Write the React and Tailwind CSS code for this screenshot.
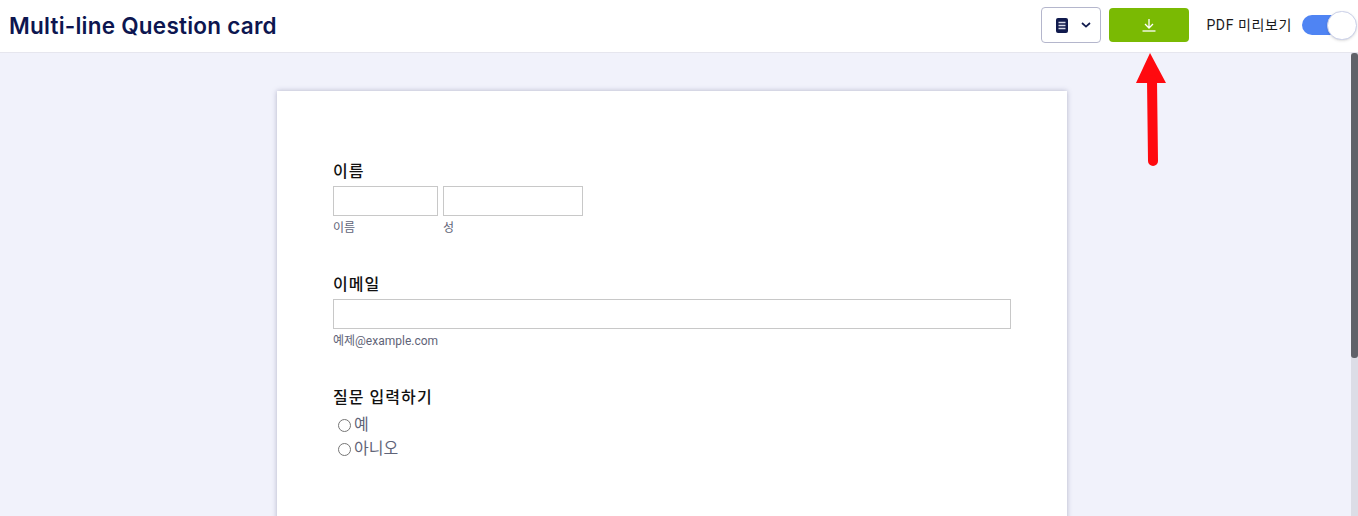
import React from "react";

const cjk = "font-['Roboto','Noto_Sans_CJK_KR',sans-serif]";

function FieldLabel({ children }) {
  return <div className="text-[16px] leading-[20px] font-medium text-[#111] tracking-[1.05px] pt-[1px] -mb-[1px]">{children}</div>;
}

function Hint({ children, className = "" }) {
  return <div className={`text-[12px] leading-[16px] text-[#5f6478] pt-[1px] -mb-[1px] ${className}`}>{children}</div>;
}

function Radio({ label }) {
  return (
    <label className="flex items-center h-[24px] pl-[5px]">
      <span className="w-[13px] h-[13px] mt-[3px] rounded-full border border-[#767676] bg-white" />
      <span className="ml-[3px] pt-[1px] text-[16px] leading-[20px] text-[#5f6478]">{label}</span>
    </label>
  );
}

export default function App() {
  return (
    <div className={`relative h-[516px] w-[1358px] overflow-hidden flex flex-col bg-[#f1f2fb] ${cjk}`}>
      {/* Top bar */}
      <header className="h-[53px] shrink-0 bg-white border-b border-[#e6e6ee] flex items-center pl-[9px]">
        <h1 className="font-['Inter',sans-serif] text-[22.5px] leading-[30px] font-semibold text-[#0d1650] tracking-[0.24px]">
          Multi-line Question card
        </h1>
        <div className="ml-auto flex items-center pb-[2px]">
          <button className="w-[60px] h-[36px] pl-[5px] rounded-[4px] border border-[#b4b6cc] bg-white flex items-center justify-center gap-[13px]">
            <svg width="12" height="15" viewBox="0 0 12 15">
              <rect width="12" height="15" rx="2" fill="#101a4d" />
              <path d="M2.5 4.5h7M2.5 7.5h7M2.5 10.5h7" stroke="#d8dae8" strokeWidth="1.5" />
            </svg>
            <svg width="10" height="6" viewBox="0 0 10 6" fill="none">
              <path d="M1 1l4 3.6L9 1" stroke="#101a4d" strokeWidth="1.7" />
            </svg>
          </button>
          <button className="ml-[8px] w-[80px] h-[34px] rounded-[4px] bg-[#7aba03] flex items-center justify-center">
            <svg width="14" height="14" viewBox="0 0 14 14" fill="none" stroke="#fff" strokeWidth="1.3">
              <path d="M7 1v8.5M3 6l4 4 4-4" />
              <path d="M0.5 13h13" />
            </svg>
          </button>
          <span className="ml-[17px] text-[14px] leading-[18px] text-[#1a1a1a] tracking-[0.6px]">PDF 미리보기</span>
          <div className="relative ml-[10px] mr-[1px] w-[55px] h-[26px] flex items-center">
            <div className="w-[40px] h-[20px] rounded-full bg-[#4f84f3]" />
            <div className="absolute left-[25px] top-0 w-[30px] h-[29px] -mt-[1px] rounded-full bg-white border border-[#c9cfe8] shadow-sm" />
          </div>
        </div>
      </header>

      <div className="flex flex-1 min-h-0">
        {/* Form preview */}
        <main className="flex-1 min-w-0 pt-[38px] pl-[277px]">
          <div className="w-[790px] h-[600px] bg-white shadow-[0_0_5px_rgba(60,60,110,0.35)] pt-[70px] pl-[56px]">
            <FieldLabel>이름</FieldLabel>
            <div className="flex gap-[5px] mt-[5px]">
              <div>
                <input className="block w-[105px] h-[30px] border border-[#c8c8c8] bg-white" />
                <Hint className="mt-[3px]">이름</Hint>
              </div>
              <div>
                <input className="block w-[140px] h-[30px] border border-[#c8c8c8] bg-white" />
                <Hint className="mt-[3px]">성</Hint>
              </div>
            </div>

            <div className="mt-[39px]">
              <FieldLabel>이메일</FieldLabel>
              <input className="block mt-[5px] w-[678px] h-[30px] border border-[#c8c8c8] bg-white" />
              <Hint className="mt-[3px]">예제@example.com</Hint>
            </div>

            <div className="mt-[39px]">
              <FieldLabel>질문 입력하기</FieldLabel>
              <div className="mt-[5px]">
                <Radio label="예" />
                <Radio label="아니오" />
              </div>
            </div>
          </div>
        </main>

        {/* Scrollbar */}
        <div className="w-[7px] shrink-0 bg-[#dcdde6]">
          <div className="w-[7px] h-[305px] rounded-[3px] bg-[#5f6269]" />
        </div>
      </div>

      {/* Red annotation arrow */}
      <svg className="absolute left-[1130px] top-[50px]" width="40" height="120" viewBox="0 0 40 120" fill="none">
        <path d="M20 3L36 33H6Z" fill="#ff0a0f" />
        <path d="M22 30L23 111" stroke="#ff0a0f" strokeWidth="10" strokeLinecap="round" />
      </svg>
    </div>
  );
}
